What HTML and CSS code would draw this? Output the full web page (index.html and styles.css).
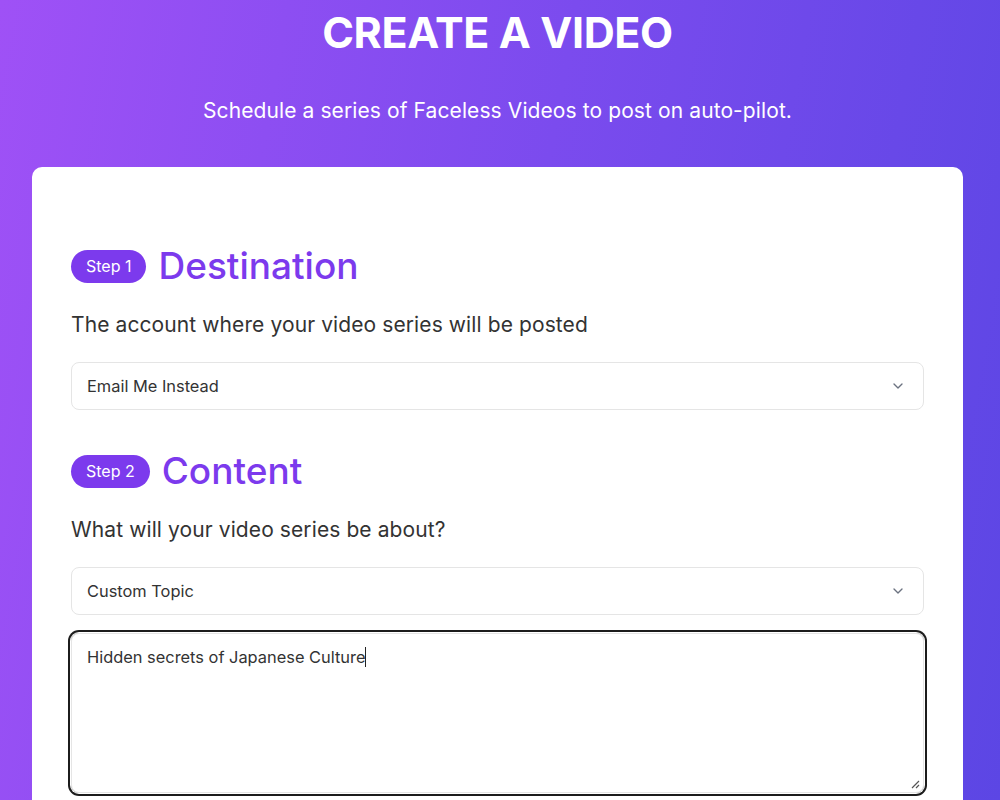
FILE: index.html
```html
<!DOCTYPE html>
<html lang="en">
<head>
<meta charset="utf-8">
<title>Create a Video</title>
<link rel="stylesheet" href="styles.css">
</head>
<body>
<div class="page">
  <header class="hero">
    <h1 class="hero-title">CREATE A VIDEO</h1>
    <p class="hero-sub">Schedule a series of Faceless Videos to post on auto-pilot.</p>
  </header>
  <main class="card">
    <section class="step">
      <div class="step-head">
        <span class="badge">Step 1</span>
        <h2 class="step-title">Destination</h2>
      </div>
      <p class="step-desc">The account where your video series will be posted</p>
      <div class="select">
        <span class="select-value">Email Me Instead</span>
        <svg class="chevron" width="16" height="16" viewBox="0 0 24 24" fill="none" stroke="#6b7280" stroke-width="2" stroke-linecap="round" stroke-linejoin="round"><path d="M6 9l6 6 6-6"/></svg>
      </div>
    </section>
    <section class="step">
      <div class="step-head">
        <span class="badge">Step 2</span>
        <h2 class="step-title">Content</h2>
      </div>
      <p class="step-desc">What will your video series be about?</p>
      <div class="select">
        <span class="select-value">Custom Topic</span>
        <svg class="chevron" width="16" height="16" viewBox="0 0 24 24" fill="none" stroke="#6b7280" stroke-width="2" stroke-linecap="round" stroke-linejoin="round"><path d="M6 9l6 6 6-6"/></svg>
      </div>
      <div class="textarea">
        <span class="ta-text">Hidden secrets of Japanese Culture</span><span class="caret"></span>
        <svg class="grip" width="10" height="10" viewBox="0 0 10 10" stroke="#555" stroke-width="1.2"><path d="M9 2L2 9M9 6L6 9"/></svg>
      </div>
    </section>
  </main>
</div>
</body>
</html>
```
FILE: styles.css
```css
* { box-sizing: border-box; }
html, body { margin: 0; padding: 0; }
body {
  font-family: Inter, "Open Sans", sans-serif;
  background: linear-gradient(100deg, #9f51f6 0%, #7b4bee 50%, #5b46e4 100%);
  min-height: 800px;
  color: #333;
}
.page {
  padding: 0 37px 40px 32px;
}
.hero {
  text-align: center;
  padding-top: 6px;
}
.hero-title {
  margin: 0;
  color: #fff;
  font-size: 43px;
  font-weight: 700;
  line-height: 52px;
  letter-spacing: -0.4px;
}
.hero-sub {
  margin: 39px 0 0;
  color: #fff;
  font-size: 21px;
  line-height: 28px;
  font-weight: 400;
  letter-spacing: 0.1px;
}
.card {
  margin-top: 42px;
  background: #fff;
  border-radius: 10px;
  padding: 79px 39px 40px;
}
.step + .step { margin-top: 41px; }
.step-head {
  display: flex;
  align-items: center;
  gap: 12px;
}
.badge {
  background: #7c3aed;
  color: #fff;
  font-size: 16px;
  line-height: 33px;
  height: 33px;
  padding: 0 15px;
  border-radius: 999px;
}
.step-title {
  margin: 0;
  color: #7c3aed;
  font-size: 37px;
  font-weight: 500;
  line-height: 40px;
}
.step-desc {
  margin: 25px 0 0;
  font-size: 21px;
  line-height: 28px;
  color: #333;
  letter-spacing: 0.1px;
}
.select {
  margin-top: 23px;
  height: 48px;
  border: 1px solid #e5e5e5;
  border-radius: 8px;
  display: flex;
  align-items: center;
  justify-content: space-between;
  padding: 0 17px 0 15px;
  font-size: 16.4px;
  color: #333;
}
.chevron { flex: none; }
.textarea {
  position: relative;
  margin-top: 18px;
  height: 160px;
  border: 1px solid #e5e5e5;
  border-radius: 8px;
  box-shadow: 0 0 0 1px #fff, 0 0 0 3px #1c1c1c;
  padding: 12px 15px;
  font-size: 16.4px;
  line-height: 22px;
  color: #333;
}
.caret {
  display: inline-block;
  width: 1px;
  height: 20px;
  background: #222;
  vertical-align: -4px;
}
.grip {
  position: absolute;
  right: 3px;
  bottom: 3px;
}
```
